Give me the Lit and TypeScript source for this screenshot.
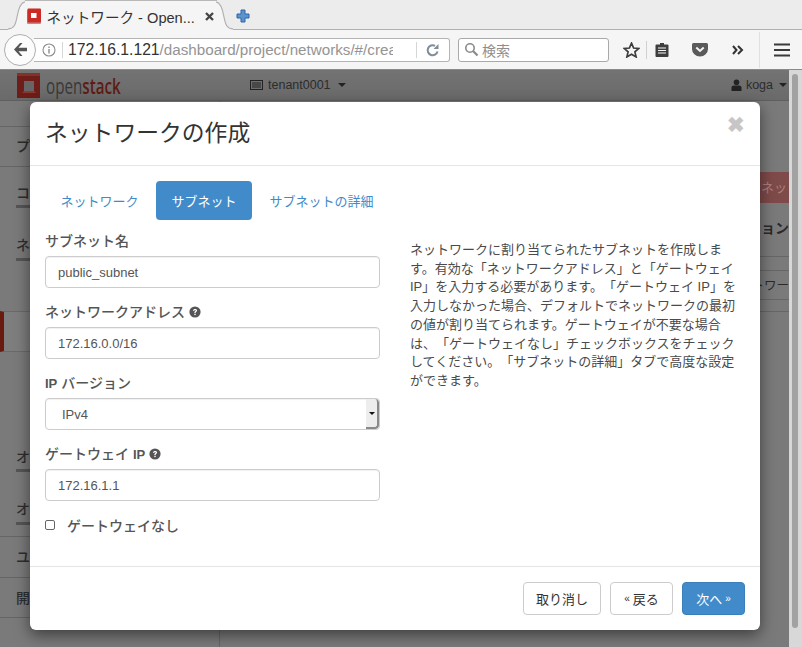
import { LitElement, html, css, svg } from "lit";
import { customElement } from "lit/decorators.js";

const help = svg`<svg class="help" viewBox="0 0 12 12" width="12" height="12"><circle cx="6" cy="6" r="5.6" fill="#555"/><path d="M4 4.7c.1-1.2 1-1.8 2.1-1.8 1.2 0 2 .7 2 1.6 0 1.400-1.500 1.300-1.500 2.500H5.300c0-1.700 1.400-1.600 1.400-2.400 0-.4-.3-.6-.7-.6-.4 0-.7.3-.8.9z" fill="#fff"/><rect x="5.300" y="7.700" width="1.400" height="1.400" fill="#fff"/></svg>`;

@customElement("app-root")
export class AppRoot extends LitElement {
  static styles = css`
    :host { display: block; width: 802px; height: 647px; overflow: hidden; position: relative;
      font-family: "Liberation Sans", "Noto Sans CJK JP", sans-serif; font-size: 13px; color: #333; background: #7b7b7b; text-spacing-trim: space-all; }
    * { box-sizing: border-box; }
    .tabstrip { height: 30px; background: #ececec; display: flex; align-items: flex-start; padding-left: 8px; position: relative; }
    .tabstrip::after { content: ""; position: absolute; left: 0; right: 0; bottom: 0; height: 1px; background: #b0b0b0; }
    .tab { display: flex; height: 30px; position: relative; z-index: 1; }
    .cap { display: block; flex: none; }
    .tabmid { width: 192px; height: 30px; margin-top: 0; background: #f5f5f5; border-top: 1.500px solid #b8b8b8; display: flex; align-items: center; gap: 6px; font-size: 14.600px; color: #333; margin-left: -0.500px; margin-right: -0.500px; padding: 1px 3px 0 1px; }
    .tabmid .t { flex: 1; white-space: nowrap; }
    .plus { margin: 9px 0 0 3px; display: block; }
    .toolbar { height: 40px; background: #f5f5f5; border-bottom: 1px solid #8a8a8a; display: flex; align-items: center; position: relative; padding-left: 4px; }
    .back { width: 32px; height: 32px; border-radius: 50%; background: #fcfcfc; border: 1px solid #aeaeae; display: flex; align-items: center; justify-content: center; z-index: 1; flex: none; }
    .url { width: 416px; height: 24px; margin-left: -2px; background: #fff; border: 1px solid #b4b4b4; border-left: none; border-radius: 0 3px 3px 0; display: flex; align-items: center; padding-left: 8px; font-size: 15.700px; color: #333; white-space: nowrap; overflow: hidden; }
    .url .i { flex: none; }
    .url .sep { width: 1px; height: 16px; background: #d6d6d6; margin: 0 5px 0 6px; flex: none; }
    .url .text { width: 325px; overflow: hidden; flex: none; }
    .url .g { color: #949494; font-size: 15.200px; }
    .url .sep2 { width: 1px; height: 16px; background: #d6d6d6; flex: none; margin: 0 9px 0 23px; }
    .search { width: 151px; height: 24px; margin-left: 8px; background: #fff; border: 1px solid #a9a9a9; border-radius: 3px; display: flex; align-items: center; padding-left: 5px; gap: 3px; color: #8f8f8f; font-size: 14px; font-family: "Noto Sans CJK JP", sans-serif; }
    .tools { display: flex; align-items: center; margin-left: 14px; }
    .tools .vsep { width: 1px; height: 18px; background: #d0d0d0; margin: 0 8px 0 6px; }
    .tools .gap1 { width: 23px; }
    .tools .gap2 { width: 24px; }
    .tools .gap3 { width: 15px; }
    .tools .vsep2 { width: 1px; height: 36px; background: #e0e0e0; margin-right: 14px; }
    .page { height: 577px; background: #7a7a7a; position: relative; display: flex; }
    .content { flex: 1; min-width: 0; position: relative; display: flex; flex-direction: column; }
    .topbar { height: 31px; flex: none; background: linear-gradient(#737373, #6a6a6a); display: flex; align-items: center; padding-left: 16px; border-bottom: 1px solid #5f5f5f; color: #2c2c2c; }
    .logo { display: flex; align-items: center; gap: 6px; width: 234px; height: 30px; flex: none; }
    .logo .word { font-family: "Open Sans", sans-serif; font-size: 22px; color: #383838; transform: scaleX(.69); transform-origin: left center; white-space: nowrap; }
    .logo b { font-weight: 600; color: #5d1c14; }
    .tenant { display: flex; align-items: center; gap: 5px; font-size: 12.500px; flex: 1; }
    .user { display: flex; align-items: center; gap: 4px; font-size: 12.500px; margin-right: 2px; }
    .caret { width: 0; height: 0; border-left: 4px solid transparent; border-right: 4px solid transparent; border-top: 4px solid #222; margin-left: 2px; }
    .body { flex: 1; display: flex; min-height: 0; }
    .side { width: 220px; flex: none; border-right: 1px solid #666; display: flex; flex-direction: column; color: #2e2e2e; font-size: 14px; font-family: "Noto Sans CJK JP", sans-serif; font-weight: 500; }
    .row { padding-left: 16px; display: flex; align-items: center; flex: none; }
    .line { border-bottom: 1px solid #656565; }
    .sub { margin-left: 16px; padding-left: 0; border-bottom: 3px solid #555; }
    .active { height: 41px; border-left: 4px solid #6b1a10; border-top: 1px solid #6a6a6a; border-bottom: 1px solid #6a6a6a; background: #7e7e7e; flex: none; }
    .spacer { flex: none; }
    .main { flex: 1; position: relative; display: flex; flex-direction: column; align-items: flex-end; overflow: hidden; color: #2a2a2a; font-family: "Noto Sans CJK JP", sans-serif; }
    .main > div { width: 30px; flex: none; white-space: nowrap; overflow: hidden; }
    .redbtn { height: 31px; margin-top: 71px; background: #7f4a4a; color: #a98080; font-size: 13px; padding: 5px 0 0 2px; }
    .th { font-size: 14px; font-weight: 700; direction: rtl; height: 54px; padding-top: 14px; border-bottom: 1px solid #666; }
    .tr0 { height: 14px; border-bottom: 1px solid #666; }
    .tr { font-size: 12.500px; direction: rtl; height: 29px; padding-top: 4px; border-bottom: 1px solid #666; }
    .tr1 { height: 12px; border-bottom: 1px solid #666; }
    .scrollwrap { width: 13px; flex: none; background: #d8d8d8; padding: 4px 4px 0 3px; }
    .thumb { width: 6px; height: 554px; background: #a2a2a2; border-radius: 3px; }

    .modal { position: absolute; left: 30px; top: 32px; width: 730px; height: 528px; background: #fff; border-radius: 6px; box-shadow: 0 5px 15px rgba(0,0,0,.5); display: flex; flex-direction: column; color: #555; font-family: "Liberation Sans", "Noto Sans CJK JP", sans-serif; }
    .mhead { height: 64px; flex: none; border-bottom: 1px solid #e5e5e5; display: flex; align-items: center; justify-content: space-between; padding: 0 15px 5px 15px; }
    .mhead h3 { margin: 0; font-size: 22.800px; font-weight: 400; color: #333; }
    .close { font-size: 21px; font-weight: bold; color: #c6c6c6; line-height: 1; margin-bottom: 14px; }
    .mbody { flex: 1; padding: 15px 15px 0; display: flex; flex-direction: column; }
    .tabs { display: flex; gap: 2px; height: 39px; flex: none; }
    .tabs a { display: flex; align-items: center; padding: 0 15.500px; border-radius: 4px; color: #428bca; font-size: 13px; white-space: nowrap; }
    .tabs a.on { background: #428bca; color: #fff; }
    .cols { display: flex; flex: 1; gap: 30px; }
    .form { width: 335px; flex: none; padding-top: 11px; }
    .field { display: flex; flex-direction: column; margin-bottom: 14px; }
    .field label { font-weight: 500; font-size: 14px; height: 20px; line-height: 18px; margin-bottom: 5px; display: flex; align-items: center; gap: 4px; color: #555; }
    .field label b { font-size: 13px; }
    .input { height: 32px; border: 1px solid #ccc; border-radius: 4px; padding: 0 12px; display: flex; align-items: center; font-size: 13px; color: #555; box-shadow: inset 0 1px 1px rgba(0,0,0,.06); }
    .select { padding: 0 0 0 16px; justify-content: space-between; overflow: hidden; }
    .arrow { width: 13px; align-self: stretch; background: #ededed; border-right: 2px solid #8a8a8a; border-bottom: 2px solid #8a8a8a; border-radius: 0 4px 4px 0; display: flex; align-items: center; justify-content: center; }
    .arrow i { width: 0; height: 0; border-left: 3px solid transparent; border-right: 3px solid transparent; border-top: 3px solid #111; }
    .check { display: flex; align-items: center; gap: 12px; font-weight: 500; margin-top: 4px; color: #555; font-size: 14px; }
    .box { width: 10px; height: 10px; border: 1px solid #666; border-radius: 2px; background: #fff; flex: none; }
    .desc { font-size: 13px; line-height: 18.700px; color: #4a4a4a; padding-top: 21px; margin: 0; width: 335px; flex: none; }
    .mfoot { height: 64px; flex: none; border-top: 1px solid #e5e5e5; display: flex; align-items: center; justify-content: flex-end; gap: 9px; padding: 0 15px 0 0; }
    .btn { height: 33px; border: 1px solid #ccc; border-radius: 4px; background: #fff; display: flex; align-items: center; justify-content: center; gap: 3px; color: #333; font-size: 13px; white-space: nowrap; }
    .btn small { font-size: 10px; }
    .btn.primary { background: #428bca; border-color: #3a7fba; color: #fff; }
  `;

  render() {
    return html`
      <div class="tabstrip">
        <div class="tab">
          <svg class="cap" width="17" height="30" viewBox="0 0 17 30"><path d="M0 30V29C6 29 7.500 25 9 17 10.500 8 12.500 2.500 17 1.800V30z" fill="#f5f5f5"/><path d="M-1 29C6 29 7.500 25 9 17 10.500 8 12.500 2.500 17 1.800" fill="none" stroke="#b0b0b0" stroke-width="1.200"/></svg>
          <div class="tabmid">
            <svg width="15" height="16" viewBox="0 0 15 16"><rect x="1" y="2" width="14" height="14" rx="1" fill="#8f1d18" opacity=".5"/><rect x="1.500" y="0.500" width="13.500" height="14" rx="1" fill="#cc2a24"/><rect x="5" y="5" width="5.500" height="5" fill="#fff"/></svg>
            <span class="t">ネットワーク - Open...</span>
            <svg width="9" height="9" viewBox="0 0 9 9"><path d="m1 1 7 7M8 1 1 8" stroke="#444" stroke-width="2.300"/></svg>
          </div>
          <svg class="cap" width="17" height="30" viewBox="0 0 17 30"><path d="M17 30V29C11 29 9.500 25 8 17 6.500 8 4.500 2.500 0 1.800V30z" fill="#f5f5f5"/><path d="M18 29C11 29 9.500 25 8 17 6.500 8 4.500 2.500 0 1.800" fill="none" stroke="#b0b0b0" stroke-width="1.200"/></svg>
        </div>
        <svg class="plus" width="14" height="14" viewBox="0 0 14 14"><path d="M5 1h4v4h4v4H9v4H5V9H1V5h4z" fill="#5b92cf" stroke="#2e67a8" stroke-width="1"/></svg>
      </div>
      <div class="toolbar">
        <div class="back"><svg width="16" height="15" viewBox="0 0 16 15"><path d="M8 1 2 7.500 8 14h2.500L6.500 9.200H15V5.800H6.500L10.500 1z" fill="#555"/></svg></div>
        <div class="url">
          <svg class="i" width="14" height="14" viewBox="0 0 14 14"><circle cx="7" cy="7" r="6" fill="none" stroke="#8c8c8c" stroke-width="1.100"/><rect x="6.300" y="6" width="1.400" height="4.500" fill="#8c8c8c"/><rect x="6.300" y="3.500" width="1.400" height="1.500" fill="#8c8c8c"/></svg>
          <span class="sep"></span>
          <span class="text">172.16.1.121<span class="g">/dashboard/project/networks/#/crea</span></span>
          <span class="sep2"></span>
          <svg width="14" height="14" viewBox="0 0 14 14"><path d="M11.500 8.500A5 5 0 1 1 9 2.800" fill="none" stroke="#7f8c99" stroke-width="2"/><path d="M7.500 6 12.500 6 12.500 1z" fill="#7f8c99"/></svg>
        </div>
        <div class="search">
          <svg width="15" height="15" viewBox="0 0 15 15"><circle cx="6" cy="6" r="4.200" fill="none" stroke="#8a8a8a" stroke-width="1.600"/><path d="m9.300 9.300 4.200 4.200" stroke="#8a8a8a" stroke-width="2.200"/></svg>
          <span>検索</span>
        </div>
        <div class="tools">
          <svg width="17" height="16" viewBox="0 0 17 16"><path d="M8.500 1.200 10.600 6l5.200.5-3.900 3.400 1.200 5-4.600-2.700-4.600 2.700 1.200-5L1.200 6.500 6.400 6z" fill="none" stroke="#3c3c3c" stroke-width="1.700"/></svg>
          <span class="vsep"></span>
          <svg width="14" height="15" viewBox="0 0 14 15"><path d="M1.500 2.500h3.500V1h4v1.500h3.500a1 1 0 0 1 1 1V14a1 1 0 0 1-1 1h-11a1 1 0 0 1-1-1V3.500a1 1 0 0 1 1-1z" fill="#3e3e3e"/><path d="M3 6h8M3 8.500h8M3 11h8" stroke="#f5f5f5" stroke-width="1.200"/></svg>
          <span class="gap1"></span>
          <svg width="16" height="15" viewBox="0 0 16 15"><path d="M1.500 1h13A1.500 1.500 0 0 1 16 2.500V7A8 7.500 0 0 1 0 7V2.500A1.500 1.500 0 0 1 1.500 1z" fill="#5a5a5a"/><path d="m4.300 5.500 3.700 3.400 3.700-3.400" fill="none" stroke="#f5f5f5" stroke-width="2"/></svg>
          <span class="gap2"></span>
          <svg width="12" height="10" viewBox="0 0 12 10"><path d="m1 1 3.500 4L1 9M6 1l4 4-4 4" fill="none" stroke="#333" stroke-width="2"/></svg>
          <span class="gap3"></span>
          <span class="vsep2"></span>
          <svg width="16" height="14" viewBox="0 0 16 14"><path d="M0 1.500h16M0 7h16M0 12.500h16" stroke="#3a3a3a" stroke-width="2.200"/></svg>
        </div>
      </div>
      <div class="page">
        <div class="content">
          <div class="topbar">
            <div class="logo">
              <svg width="24" height="25" viewBox="0 0 24 25"><path d="M1 0h23v25H1z" fill="#6e1d18"/><path d="M1 0h23v3H1z" fill="#86302a"/><rect x="8" y="8" width="10" height="10" fill="#666"/><path d="M8 18h10l2 2H6z" fill="#8a3a33"/></svg>
              <span class="word">open<b>stack</b></span>
            </div>
            <div class="tenant">
              <svg width="13" height="10" viewBox="0 0 13 10"><rect x=".5" y=".5" width="12" height="9" fill="none" stroke="#222"/><path d="M2 3h9M2 5h9M2 7h9" stroke="#222"/></svg>
              <span>tenant0001</span><span class="caret"></span>
            </div>
            <div class="user">
              <svg width="11" height="12" viewBox="0 0 11 12"><circle cx="5.500" cy="3.200" r="2.800" fill="#222"/><path d="M.5 12V8.500Q.5 6.500 3 6.500h5q2.500 0 2.500 2V12z" fill="#222"/></svg>
              <span>koga</span><span class="caret"></span>
            </div>
          </div>
          <div class="body">
            <div class="side">
              <div class="row line" style="height:26px"></div>
              <div class="row line" style="height:40px;padding-bottom:3px">プ</div>
              <div class="row sub" style="height:41px;padding-top:12px">コ</div>
              <div class="row" style="height:10px"></div>
              <div class="row sub" style="height:43px;padding-top:12px">ネ</div>
              <div class="spacer" style="height:50px"></div>
              <div class="active"></div>
              <div class="spacer" style="height:90px"></div>
              <div class="row sub" style="height:30px">オ</div>
              <div class="row" style="height:21px"></div>
              <div class="row sub" style="height:32px">オ</div>
              <div class="row line" style="height:12px"></div>
              <div class="row line" style="height:41px;padding-bottom:3px">ユ</div>
              <div class="row line" style="height:40px;padding-bottom:1px">開</div>
            </div>
            <div class="main">
              <div class="redbtn">ネッ</div>
              <div class="th">ョン</div>
              <div class="tr0"></div>
              <div class="tr">トワー</div>
              <div class="tr1"></div>
            </div>
          </div>
        </div>
        <div class="scrollwrap"><div class="thumb"></div></div>
        <div class="modal">
          <div class="mhead"><h3>ネットワークの作成</h3><span class="close">✖</span></div>
          <div class="mbody">
            <div class="tabs">
              <a>ネットワーク</a><a class="on">サブネット</a><a>サブネットの詳細</a>
            </div>
            <div class="cols">
              <div class="form">
                <div class="field"><label><span>サブネット名</span></label><div class="input">public_subnet</div></div>
                <div class="field"><label><span>ネットワークアドレス</span>${help}</label><div class="input">172.16.0.0/16</div></div>
                <div class="field"><label><span><b>IP</b> バージョン</span></label><div class="input select"><span>IPv4</span><span class="arrow"><i></i></span></div></div>
                <div class="field"><label><span>ゲートウェイ <b>IP</b></span>${help}</label><div class="input">172.16.1.1</div></div>
                <div class="check"><span class="box"></span>ゲートウェイなし</div>
              </div>
              <p class="desc">ネットワークに割り当てられたサブネットを作成します。有効な「ネットワークアドレス」と「ゲートウェイ IP」を入力する必要があります。「ゲートウェイ IP」を入力しなかった場合、デフォルトでネットワークの最初の値が割り当てられます。ゲートウェイが不要な場合は、「ゲートウェイなし」チェックボックスをチェックしてください。「サブネットの詳細」タブで高度な設定ができます。</p>
            </div>
          </div>
          <div class="mfoot">
            <div class="btn" style="width:78px">取り消し</div>
            <div class="btn" style="width:63px"><small>«</small> 戻る</div>
            <div class="btn primary" style="width:63px">次へ <small>»</small></div>
          </div>
        </div>
      </div>
    `;
  }
}
